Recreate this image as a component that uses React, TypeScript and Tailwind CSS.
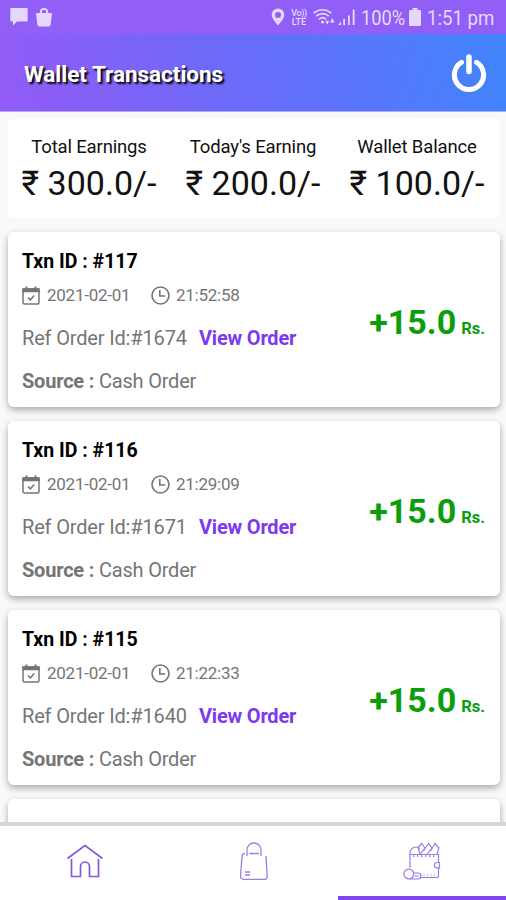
import type { ReactNode } from "react";

type Txn = {
  id: number;
  date: string;
  time: string;
  orderId: number;
  source: string;
  amount: string;
};

const totals = [
  { label: "Total Earnings", value: "₹ 300.0/-" },
  { label: "Today's Earning", value: "₹ 200.0/-" },
  { label: "Wallet Balance", value: "₹ 100.0/-" },
];

const txns: Txn[] = [
  { id: 117, date: "2021-02-01", time: "21:52:58", orderId: 1674, source: "Cash Order", amount: "+15.0" },
  { id: 116, date: "2021-02-01", time: "21:29:09", orderId: 1671, source: "Cash Order", amount: "+15.0" },
  { id: 115, date: "2021-02-01", time: "21:22:33", orderId: 1640, source: "Cash Order", amount: "+15.0" },
];

function StatusBar() {
  return (
    <div className="flex h-[34px] shrink-0 items-center bg-[#915ff5] pl-[10px] pr-[11px] text-[#e6d8fd]">
      <svg width="18" height="18" viewBox="0 0 18 18" fill="currentColor">
        <path d="M1.500 0h15a1.200 1.200 0 0 1 1.200 1.200v11a1.200 1.200 0 0 1-1.200 1.200H7L3 17.500V13.400H1.500A1.200 1.200 0 0 1 .3 12.200v-11A1.200 1.200 0 0 1 1.500 0z" />
      </svg>
      <svg className="ml-[8px]" width="16" height="19" viewBox="0 0 16 19" fill="currentColor">
        <path d="M3.800 5V4a4.200 4.200 0 0 1 8.400 0v1H16l-1.300 11.500A2.200 2.200 0 0 1 12.500 18.500h-9A2.200 2.200 0 0 1 1.300 16.500L0 5zM5.800 5h4.400V4a2.200 2.200 0 0 0-4.400 0z" />
      </svg>
      <div className="ml-auto flex items-center">
        <svg width="14" height="18" viewBox="0 0 14 18" fill="currentColor" fillRule="evenodd">
          <path d="M7 .5a6.300 6.300 0 0 0-6.300 6.300C.7 11 7 17.300 7 17.300s6.300-6.300 6.300-10.500A6.300 6.300 0 0 0 7 .5zM7 4a3 3 0 1 1 0 6 3 3 0 0 1 0-6z" />
        </svg>
        <div className="ml-[5px] w-[18px] pt-[2px] text-center text-[9px] font-medium leading-[9px]">
          <div className="tracking-[-0.4px]">Vo))</div>
          <div>LTE</div>
        </div>
        <svg className="ml-[5px]" width="22" height="18" viewBox="0 0 22 18" fill="none" stroke="currentColor" strokeWidth="1.700">
          <path d="M.7 5Q9.500 -1.500 18.300 5M3.200 8.200Q9.500 3 15.800 8.200M6 11.300Q9.500 8 13 11.300" />
          <circle cx="9.500" cy="14" r="1.500" fill="currentColor" stroke="none" />
          <path d="M12.300 12.800h4l-2 4zM17 14.500h4.500l-2.200-4.500z" fill="currentColor" stroke="none" />
        </svg>
        <svg className="ml-[3px]" width="18" height="18" viewBox="0 0 18 18" fill="currentColor">
          <path d="M0 17l3-3.500v3.500zM5.200 11h1.800v6H5.200zM10 7.500h1.800v9.500H10zM14.700 1.500h1.900v15.500h-1.900z" />
        </svg>
        <span className="ml-[5px] w-[44px] whitespace-nowrap pt-[2px] text-[20.500px] leading-[24px]">
          <span className="inline-block origin-left scale-x-[0.89]">100%</span>
        </span>
        <svg className="ml-[4px]" width="12" height="18" viewBox="0 0 12 18" fill="currentColor">
          <path d="M3.500 0h5v2H11a1 1 0 0 1 1 1v14a1 1 0 0 1-1 1H1a1 1 0 0 1-1-1V3a1 1 0 0 1 1-1h2.500z" />
        </svg>
        <span className="ml-[6px] w-[68px] whitespace-nowrap pt-[2px] text-[20.500px] leading-[24px]">
          <span className="inline-block origin-left scale-x-[0.91]">1:51 pm</span>
        </span>
      </div>
    </div>
  );
}

function Header() {
  return (
    <header className="flex h-[78px] shrink-0 items-center justify-between border-b border-[#a9a6fb] bg-[linear-gradient(78deg,#915bf6_3%,#6a6cf9_48%,#5479fa_76%,#4084fa_100%)] pl-[24px] pr-[19px]">
      <h1 className="pt-[4px] text-[22.500px] font-bold tracking-[-0.020px] text-white [text-shadow:2px_2px_2px_#000000]">
        Wallet Transactions
      </h1>
      <svg width="36" height="38" viewBox="0 0 36 38" fill="none" stroke="#fff" strokeWidth="5" strokeLinecap="round">
        <path d="M10.500 8.400A14.600 14.600 0 1 0 25.500 8.400" />
        <path d="M18 3v14.500" strokeWidth="5.500" />
      </svg>
    </header>
  );
}

function Summary() {
  return (
    <div className="grid h-[99px] shrink-0 grid-cols-3 rounded-md bg-white pt-[17px] text-center text-[#111]">
      {totals.map((t) => (
        <div key={t.label} className="pr-[2px]">
          <div className="whitespace-nowrap text-[18.500px] leading-[22px] tracking-[-0.150px]">{t.label}</div>
          <div className="mt-[5px] whitespace-nowrap text-[34px] leading-[40px]">{t.value}</div>
        </div>
      ))}
    </div>
  );
}

function CalendarIcon() {
  return (
    <svg width="18" height="19" viewBox="0 0 18 19" fill="none" stroke="currentColor" strokeWidth="1.500">
      <rect x="1" y="3" width="16" height="15" rx="1.500" />
      <path d="M1 3h16v2.500H1z" fill="currentColor" />
      <path d="M4.500 .5v3M13.500 .5v3" strokeWidth="2" />
      <path d="M6 11.500l2.300 2.300 4-4.300" />
    </svg>
  );
}

function ClockIcon() {
  return (
    <svg width="19" height="19" viewBox="0 0 19 19" fill="none" stroke="currentColor" strokeWidth="1.600">
      <circle cx="9.500" cy="9.500" r="8.500" />
      <path d="M8.800 4v6h5.400" />
    </svg>
  );
}

function TxnCard({ txn }: { txn: Txn }) {
  return (
    <div className="flex h-[175px] shrink-0 justify-between rounded-md bg-white pl-[14px] pr-[15px] shadow-[0_3px_7px_rgba(0,0,0,0.32)]">
      <div className="pt-[18px] text-[#757575]">
        <div className="text-[19.500px] font-bold leading-[24px] text-black">Txn ID : #{txn.id}</div>
        <div className="mt-[9px] flex h-[24px] items-center text-[17px] tracking-[-0.250px]">
          <CalendarIcon />
          <span className="ml-[7px] w-[83px] whitespace-nowrap pt-[2px]">{txn.date}</span>
          <span className="ml-[21px] flex">
            <ClockIcon />
          </span>
          <span className="ml-[6px] whitespace-nowrap pt-[2px]">{txn.time}</span>
        </div>
        <div className="mt-[19px] flex h-[24px] items-center text-[20px]">
          <span className="w-[177px] whitespace-nowrap tracking-[-0.160px]">Ref Order Id:#{txn.orderId}</span>
          <a className="whitespace-nowrap font-bold tracking-[-0.200px] text-[#7c3aed]">View Order</a>
        </div>
        <div className="mt-[19px] h-[24px] text-[20px] leading-[24px] tracking-[-0.200px]">
          <span className="font-bold">Source :</span> {txn.source}
        </div>
      </div>
      <div className="flex items-baseline pt-[70px] font-bold text-[#0b9d0b]">
        <span className="text-[34px] leading-[40px]">{txn.amount}</span>
        <span className="ml-[5px] text-[16.500px]">Rs.</span>
      </div>
    </div>
  );
}

function HomeIcon() {
  return (
    <svg width="36" height="34" viewBox="0 0 36 34" fill="none" stroke="#8258df" strokeWidth="1.700">
      <path d="M.5 14.500L18 1.500l17.500 13" />
      <path d="M4.500 15v17.500h9V22.500a4.500 4.500 0 0 1 9 0v10h9V15" />
    </svg>
  );
}

function BagIcon() {
  return (
    <svg width="30" height="38" viewBox="0 0 30 38" fill="none" stroke="#9d7ce8" strokeWidth="1.300">
      <path d="M8 14V8a7 7 0 0 1 14 0v6" />
      <path d="M6 11.500c-2 0-2.800 1-3 3L1.500 34c-.1 2 .8 3.300 3 3.300h21c2 0 2.800-1 2.700-3L27 14M10.500 11.500h9.500" />
      <path d="M6 30h5M6 33h5" />
    </svg>
  );
}

function WalletIcon() {
  return (
    <svg width="38" height="38" viewBox="0 0 38 38" fill="none" stroke="#9b7be9" strokeWidth="1.200">
      <path d="M7 26V11c0-3 2.500-6 6-6 1.500 0 2.500.5 4 1.500" />
      <path d="M7 12.500h28.500v8M35.500 26v7.500c0 1.500-.5 2-2 2H17" />
      <path d="M17 12l-2-6.500L18.500 1.500 22 6l-5 6.500M20.500 9L25.500 1.500 29 6l-5 6.500M27.500 9L32 1.500 36 6l-2 6" />
      <path d="M10 14.200h22" strokeDasharray="1.300 2.700" strokeWidth="1.700" />
      <path d="M17 33h17" strokeDasharray="1 2.500" strokeWidth="3" strokeOpacity=".5" />
      <path d="M36.500 20.500h-2.500a2.700 2.700 0 0 0 0 5.400h2.500z" />
      <circle cx="5.800" cy="32" r="4.900" />
      <path d="M10.500 31h4.500a3 3 0 0 1 0 6H7M11.500 34h4" />
    </svg>
  );
}

function Tab({ children, active = false }: { children: ReactNode; active?: boolean }) {
  return (
    <button className={`flex items-center justify-center border-b-4 pb-[1px] ${active ? "border-[#7f45ee]" : "border-transparent"}`}>
      {children}
    </button>
  );
}

export default function App() {
  return (
    <div className="flex h-[900px] w-[506px] flex-col overflow-hidden bg-[#f9f9f9] font-['Roboto','Noto_Sans',sans-serif]">
      <StatusBar />
      <Header />
      <main className="flex min-h-0 flex-1 flex-col overflow-hidden pl-[8px] pr-[6px] pt-[7px]">
        <Summary />
        <div className="mt-[14px] flex flex-col gap-[14px]">
          {txns.map((t) => (
            <TxnCard key={t.id} txn={t} />
          ))}
          <div className="h-[175px] shrink-0 rounded-md bg-white shadow-[0_3px_7px_rgba(0,0,0,0.32)]" />
        </div>
      </main>
      <nav className="grid h-[78px] shrink-0 grid-cols-[169px_169px_168px] border-t-4 border-[#d5d5d5] bg-white">
        <Tab>
          <HomeIcon />
        </Tab>
        <Tab>
          <BagIcon />
        </Tab>
        <Tab active>
          <WalletIcon />
        </Tab>
      </nav>
    </div>
  );
}
